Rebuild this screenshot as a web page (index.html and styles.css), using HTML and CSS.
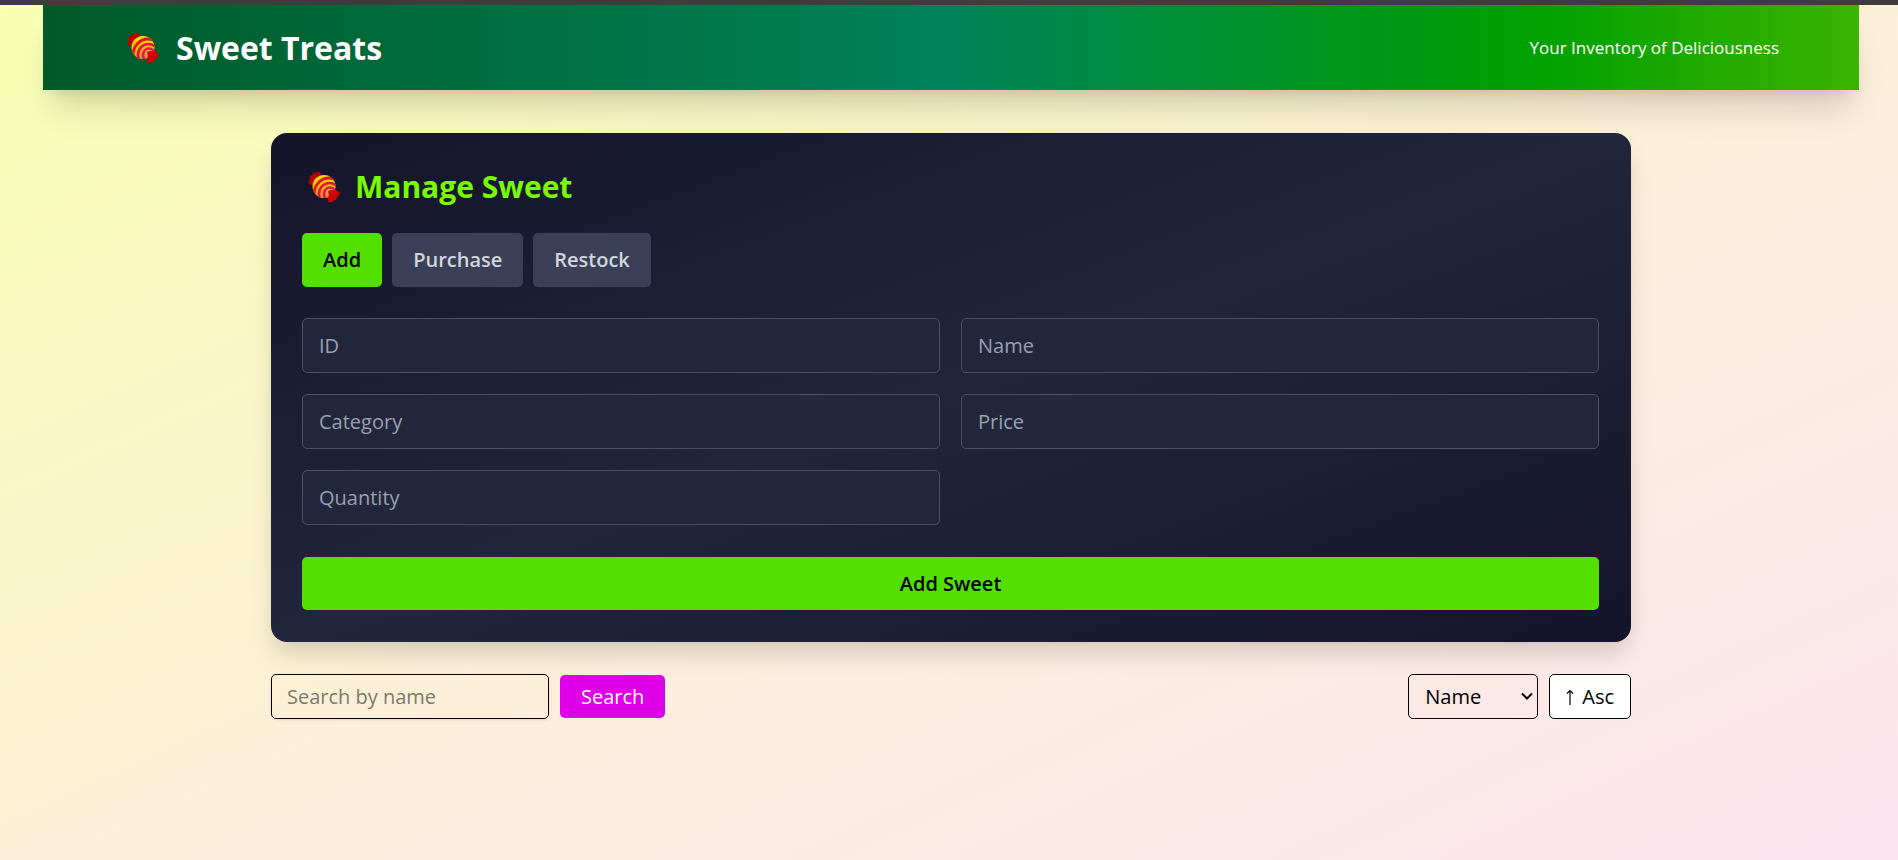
FILE: index.html
```html
<!DOCTYPE html>
<html lang="en">
<head>
<meta charset="utf-8">
<title>Sweet Treats</title>
<link rel="stylesheet" href="styles.css">
</head>
<body>
<svg class="defs" aria-hidden="true">
  <defs>
    <linearGradient id="candy-shade" x1="0.5" y1="0" x2="0.4" y2="1">
      <stop offset="0" stop-color="#f8e000"/>
      <stop offset="0.6" stop-color="#f2b800"/>
      <stop offset="1" stop-color="#d98a3c"/>
    </linearGradient>
    <clipPath id="candy-ball"><circle cx="16" cy="15.500" r="11.500"/></clipPath>
  </defs>
  <symbol id="candy" viewBox="0 0 32 32">
    <path fill="#b80000" d="M0.500 11.500C0 9.500 1.500 9 2 8C1 5.500 2 4 4 4.200C4.500 2 6 1.200 8 2C9.500 0 12.500 0.500 13 3L12 7L7 14L4 13.500C2 14 0.800 13 0.500 11.500Z"/>
    <circle cx="16" cy="15.500" r="11.500" fill="url(#candy-shade)"/>
    <g clip-path="url(#candy-ball)" fill="none">
      <ellipse cx="21" cy="23" rx="15" ry="16" stroke="#e4151b" stroke-width="2.800"/>
      <ellipse cx="21.500" cy="23" rx="10.500" ry="11" stroke="#e4143c" stroke-width="2.600"/>
      <ellipse cx="22" cy="23" rx="6" ry="6.500" stroke="#e8106c" stroke-width="2.600"/>
    </g>
    <path fill="#d40000" d="M20 20.500C22 18.500 24 19 26 19.500C28 18.500 29 19.500 29.500 20.500C31.500 20.500 32.500 22 31 23.500C31 25.500 30 26 28.500 26.500C29 28.500 27.500 29.500 26 29C25 31 22.500 32 20.500 31C19.500 29 20 26 21 24.500Z"/>
  </symbol>
</svg>
<div class="page">
  <header class="header">
    <h1 class="brand"><svg class="candy"><use href="#candy"/></svg>Sweet Treats</h1>
    <p class="tagline">Your Inventory of Deliciousness</p>
  </header>
  <main class="content">
    <section class="card">
      <h2 class="title"><svg class="candy"><use href="#candy"/></svg>Manage Sweet</h2>
      <div class="tabs">
        <button type="button" class="tab tab-active">Add</button>
        <button type="button" class="tab">Purchase</button>
        <button type="button" class="tab">Restock</button>
      </div>
      <form class="form">
        <input class="field" type="text" placeholder="ID" aria-label="ID">
        <input class="field" type="text" placeholder="Name" aria-label="Name">
        <input class="field" type="text" placeholder="Category" aria-label="Category">
        <input class="field" type="text" placeholder="Price" aria-label="Price">
        <input class="field" type="text" placeholder="Quantity" aria-label="Quantity">
        <button type="button" class="submit">Add Sweet</button>
      </form>
    </section>
    <div class="toolbar">
      <div class="group">
        <input class="search" type="text" placeholder="Search by name" aria-label="Search by name">
        <button type="button" class="search-button">Search</button>
      </div>
      <div class="group">
        <div class="select-wrap">
          <select class="sort" aria-label="Sort by">
            <option>Name</option>
            <option>Price</option>
            <option>Quantity</option>
          </select>
          <svg class="chevron" viewBox="0 0 12 8"><path d="M1 1.500L6 6.500L11 1.500" fill="none" stroke="#000" stroke-width="2"/></svg>
        </div>
        <button type="button" class="order"><svg class="arrow" viewBox="0 0 8 16"><path d="M4 16V1.500M1 4.500L4 1.500L7 4.500" fill="none" stroke="#000" stroke-width="1.200"/></svg>Asc</button>
      </div>
    </div>
  </main>
</div>
</body>
</html>
```

FILE: styles.css
```css
*,
*::before,
*::after {
  box-sizing: border-box;
}

body {
  margin: 0;
  font-family: "Open Sans", "Noto Sans", sans-serif;
  font-size: 20px;
  line-height: 32px;
}

h1,
h2,
p {
  margin: 0;
}

button,
input,
select {
  font: inherit;
  margin: 0;
}

.defs {
  position: absolute;
  width: 0;
  height: 0;
}

.page {
  min-height: 100vh;
  padding: 0 39px 40px 43px;
  border-top: 5px solid #3d3d3d;
  background: linear-gradient(to bottom right, #f9ffb3, #fbeedb 56%, #fde4f0);
}

.header {
  display: flex;
  align-items: center;
  justify-content: space-between;
  min-height: 85px;
  padding: 0 80px 0 84px;
  color: #fff;
  background: linear-gradient(to right, #005a28, #008259 50%, #00a000 82%, #3cb300);
  box-shadow: 0 26px 34px -8px rgba(0, 0, 0, 0.14), 0 10px 14px -8px rgba(0, 0, 0, 0.1);
}

.brand {
  display: flex;
  align-items: center;
  gap: 17px;
  font-size: 32px;
  line-height: 40px;
  font-weight: 700;
}

.candy {
  width: 32px;
  height: 32px;
}

.tagline {
  font-size: 17px;
  line-height: 28px;
}

.content {
  max-width: 1360px;
  margin: 43px auto 0;
}

.card {
  padding: 32px 32px 32px 31px;
  border-radius: 16px;
  background: linear-gradient(to bottom right, #14142a, #21263c 50%, #14142a);
  box-shadow: 0 14px 24px -4px rgba(0, 0, 0, 0.16);
}

.title {
  display: flex;
  align-items: center;
  gap: 15px;
  padding-left: 6px;
  font-size: 30px;
  line-height: 44px;
  color: #78fa00;
}

.tabs {
  display: flex;
  gap: 10px;
  margin-top: 24px;
}

.tab {
  height: 54px;
  padding: 0 21px;
  border: 0;
  border-radius: 5px;
  font-weight: 600;
  color: #d1d5dc;
  background: #3b3f58;
}

.tab-active {
  color: #000;
  background: #53e000;
}

.form {
  display: grid;
  grid-template-columns: 1fr 1fr;
  gap: 21px;
  margin-top: 31px;
}

.field {
  width: 100%;
  height: 55px;
  padding: 0 16px;
  border: 1px solid #4a5065;
  border-radius: 5px;
  color: #fff;
  background: #22273d;
}

.field::placeholder {
  color: #99a1af;
}

.submit {
  grid-column: 1 / -1;
  height: 53px;
  margin-top: 11px;
  border: 0;
  border-radius: 5px;
  font-weight: 600;
  color: #000;
  background: #53e000;
}

.toolbar {
  display: flex;
  justify-content: space-between;
  margin-top: 32px;
}

.group {
  display: flex;
  align-items: center;
  gap: 11px;
}

.search {
  width: 278px;
  height: 45px;
  padding: 0 15px;
  border: 1px solid #000;
  border-radius: 5px;
  background: transparent;
  box-shadow: 0 1px 3px rgba(0, 0, 0, 0.1);
}

.search::placeholder {
  color: #7c7a6c;
}

.search-button {
  height: 43px;
  padding: 0 21px;
  border: 0;
  border-radius: 5px;
  color: #fff;
  background: #de00e8;
}

.select-wrap {
  position: relative;
}

.sort {
  display: block;
  width: 130px;
  height: 45px;
  padding: 0 16px;
  border: 1px solid #000;
  border-radius: 5px;
  appearance: none;
  color: #000;
  background: transparent;
}

.chevron {
  position: absolute;
  right: 5px;
  top: 18px;
  width: 12px;
  height: 8px;
  pointer-events: none;
}

.order {
  display: flex;
  align-items: center;
  gap: 8px;
  height: 45px;
  padding: 0 16px;
  border: 1px solid #000;
  border-radius: 5px;
  color: #000;
  background: #fff;
}

.arrow {
  width: 8px;
  height: 16px;
}
```
